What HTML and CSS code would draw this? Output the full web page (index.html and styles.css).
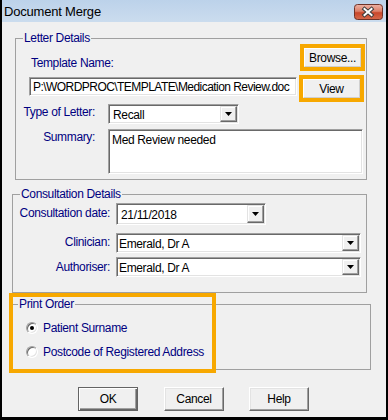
FILE: index.html
```html
<!DOCTYPE html>
<html>
<head>
<meta charset="utf-8">
<title>Document Merge</title>
<link rel="stylesheet" href="styles.css">
</head>
<body>
<div class="window">
  <div class="titlebar">
    <span class="title">Document Merge</span>
    <span class="close">
      <svg width="29" height="16" viewBox="0 0 29 16">
        <defs>
          <linearGradient id="cg" x1="0" y1="0" x2="0" y2="1">
            <stop offset="0" stop-color="#eeb3a5"/>
            <stop offset="0.45" stop-color="#dc8069"/>
            <stop offset="0.55" stop-color="#c8472b"/>
            <stop offset="1" stop-color="#d66a4c"/>
          </linearGradient>
        </defs>
        <rect x="0.5" y="0.5" width="28" height="15" rx="3" fill="url(#cg)" stroke="#6e3328"/>
        <path d="M10.5 5 L17.5 11 M17.5 5 L10.5 11" stroke="#3c3c3c" stroke-width="4" stroke-linecap="square" fill="none"/>
        <path d="M10.5 5 L17.5 11 M17.5 5 L10.5 11" stroke="#ffffff" stroke-width="2" stroke-linecap="square" fill="none"/>
      </svg>
    </span>
  </div>
  <div class="client">
    <div class="group letter">
      <span class="legend">Letter Details</span>
      <div class="row tpl-row">
        <span class="label tpl-label">Template Name:</span>
        <span class="mark"><span class="btn side-btn">Browse...</span></span>
      </div>
      <div class="row path-row">
        <div class="field path">P:\WORDPROC\TEMPLATE\Medication Review.doc</div>
        <span class="mark"><span class="btn side-btn">View</span></span>
      </div>
      <div class="row type-row">
        <span class="label col-a">Type of Letter:</span>
        <div class="field combo type-combo">
          <span class="value">Recall</span>
          <span class="drop"><svg width="7" height="4" viewBox="0 0 7 4"><path d="M0 0H7L3.5 4Z" fill="#000"/></svg></span>
        </div>
      </div>
      <div class="row sum-row">
        <span class="label col-a">Summary:</span>
        <div class="field memo">Med Review needed</div>
      </div>
    </div>

    <div class="group consult">
      <span class="legend">Consultation Details</span>
      <div class="row date-row">
        <span class="label col-b lbl-2">Consultation date:</span>
        <div class="field combo date-combo">
          <span class="value">21/11/2018</span>
          <span class="drop"><svg width="7" height="4" viewBox="0 0 7 4"><path d="M0 0H7L3.5 4Z" fill="#000"/></svg></span>
        </div>
      </div>
      <div class="row clin-row">
        <span class="label col-b lbl-1">Clinician:</span>
        <div class="field combo wide-combo">
          <span class="value value-tight">Emerald, Dr A</span>
          <span class="drop"><svg width="7" height="4" viewBox="0 0 7 4"><path d="M0 0H7L3.5 4Z" fill="#000"/></svg></span>
        </div>
      </div>
      <div class="row auth-row">
        <span class="label col-b lbl-2">Authoriser:</span>
        <div class="field combo wide-combo">
          <span class="value value-tight">Emerald, Dr A</span>
          <span class="drop"><svg width="7" height="4" viewBox="0 0 7 4"><path d="M0 0H7L3.5 4Z" fill="#000"/></svg></span>
        </div>
      </div>
    </div>

    <div class="group print">
      <span class="legend">Print Order</span>
      <div class="radio-row first">
        <span class="radio checked"></span>
        <span class="radio-text">Patient Surname</span>
      </div>
      <div class="radio-row second">
        <span class="radio"></span>
        <span class="radio-text">Postcode of Registered Address</span>
      </div>
      <div class="highlight"></div>
    </div>

    <div class="buttons">
      <span class="btn dlg-btn default ok">OK</span>
      <span class="btn dlg-btn cancel">Cancel</span>
      <span class="btn dlg-btn">Help</span>
    </div>
  </div>
</div>
</body>
</html>
```

FILE: styles.css
```css
* {
  box-sizing: border-box;
}

html,
body {
  margin: 0;
  padding: 0;
}

body {
  background: #000;
  width: 388px;
  height: 420px;
  overflow: hidden;
  font-family: "Liberation Sans", Arial, sans-serif;
  font-size: 12px;
  letter-spacing: -0.35px;
  color: #000;
}

.window {
  margin-left: 2px;
  width: 384px;
  height: 417px;
  background: #f0f0f0;
  display: flex;
  flex-direction: column;
}

.titlebar {
  flex: none;
  height: 22px;
  display: flex;
  justify-content: space-between;
  align-items: flex-start;
  background: linear-gradient(#bcd2ea, #cbdcee);
}

.title {
  font-size: 13px;
  letter-spacing: -0.2px;
  line-height: 23px;
  margin-left: 2px;
}

.close {
  display: block;
  width: 29px;
  height: 16px;
  margin: 4px 3px 0 0;
}

.close svg {
  display: block;
}

.client {
  display: flex;
  flex-direction: column;
}

.group {
  border: 1px solid #a0a0a0;
  display: flex;
  flex-direction: column;
}

.legend {
  align-self: flex-start;
  margin: -8px 0 -7px 7px;
  padding: 0 1px;
  height: 15px;
  line-height: 15px;
  background: #f0f0f0;
  color: #000080;
  white-space: nowrap;
}

.row {
  display: flex;
}

.label {
  color: #000080;
  line-height: 16px;
  white-space: nowrap;
}

/* Letter details */
.letter {
  margin: 16px 0 0 13px;
  width: 352px;
  padding-bottom: 5px;
}

.tpl-row {
  margin: 5px 1px 0 0;
  justify-content: space-between;
  align-items: flex-end;
}

.tpl-label {
  margin-left: 15px;
}

.mark {
  display: flex;
  width: 65px;
  height: 27px;
  border: 4px solid #f7a800;
}

.btn {
  display: flex;
  align-items: center;
  justify-content: center;
  background: #f0f0f0;
  color: #000;
  border: 1px solid;
  border-color: #ffffff #696969 #696969 #ffffff;
  box-shadow: inset -1px -1px #a0a0a0, inset 1px 1px #e3e3e3;
  white-space: nowrap;
}

.side-btn {
  flex: 1;
  border-color: #ffffff #d0d0d0 #d0d0d0 #ffffff;
  box-shadow: none;
}

.path-row {
  margin-top: 4px;
  align-items: flex-start;
}

.field {
  background: #fff;
  color: #000;
  border: 1px solid;
  border-color: #a0a0a0 #ffffff #ffffff #a0a0a0;
  box-shadow: inset 1px 1px #696969, inset -1px -1px #e3e3e3;
  white-space: nowrap;
  overflow: hidden;
}

.path {
  margin: 2px 2px 0 13px;
  width: 268px;
  height: 19px;
  padding-left: 3px;
  line-height: 18px;
  letter-spacing: -0.55px;
}

.type-row {
  margin-top: 2px;
  align-items: flex-start;
}

.col-a {
  width: 79px;
  text-align: right;
}

.combo {
  display: flex;
  align-items: stretch;
}

.type-combo {
  margin-left: 13px;
  width: 131px;
  height: 20px;
}

.value {
  flex: 1;
  padding: 2px 0 0 4px;
  line-height: 16px;
}

.value-tight {
  padding-left: 2px;
}

.drop {
  flex: none;
  width: 17px;
  margin: 1px 1px 1px 0;
  display: flex;
  align-items: center;
  justify-content: center;
  background: #f0f0f0;
  border: 1px solid;
  border-color: #e3e3e3 #696969 #696969 #e3e3e3;
  box-shadow: inset -1px -1px #a0a0a0, inset 1px 1px #ffffff;
}

.drop svg {
  display: block;
}

.sum-row {
  margin-top: 5px;
  align-items: flex-start;
}

.memo {
  margin-left: 13px;
  width: 255px;
  height: 45px;
  padding: 3px 3px;
  line-height: 15px;
}

/* Consultation details */
.consult {
  margin: 14px 0 0 10px;
  width: 355px;
  padding-bottom: 15px;
}

.consult .row {
  align-items: flex-start;
}

.col-b {
  width: 97px;
  text-align: right;
}

.lbl-1 {
  margin-top: 1px;
}

.lbl-2 {
  margin-top: 2px;
}

.date-row {
  margin-top: 8px;
}

.date-combo {
  margin-left: 6px;
  width: 150px;
  height: 22px;
}

.date-combo .value {
  padding-top: 3px;
}

.clin-row {
  margin-top: 8px;
}

.auth-row {
  margin-top: 4px;
}

.wide-combo {
  margin-left: 6px;
  width: 245px;
  height: 20px;
}

/* Print order */
.print {
  position: relative;
  margin: 11px 0 0 8px;
  width: 361px;
  padding-bottom: 9px;
}

.radio-row {
  display: flex;
  align-items: center;
  margin-left: 15px;
  height: 16px;
  line-height: 16px;
  color: #000080;
}

.radio-row.first {
  margin-top: 15px;
}

.radio-row.second {
  margin-top: 8px;
}

.radio {
  flex: none;
  width: 12px;
  height: 12px;
  margin-right: 5px;
  border-radius: 50%;
  background: #fff;
  border: 1px solid;
  border-color: #a0a0a0 #ffffff #ffffff #a0a0a0;
  box-shadow: inset 1px 1px #696969, inset -1px -1px #e3e3e3;
  display: flex;
  align-items: center;
  justify-content: center;
}

.radio.checked::after {
  content: "";
  width: 4px;
  height: 4px;
  border-radius: 50%;
  background: #000;
}

.highlight {
  position: absolute;
  left: -2px;
  top: -12px;
  width: 207px;
  height: 80px;
  border: 4px solid #f7a800;
}

/* Buttons */
.buttons {
  display: flex;
  margin-top: 17px;
  padding-left: 76px;
}

.dlg-btn {
  width: 60px;
  height: 24px;
}

.default {
  border: 1px solid #646464;
  box-shadow: inset 1px 1px #ffffff, inset -1px -1px #696969, inset -2px -2px #a0a0a0;
}

.ok {
  margin-right: 26px;
}

.cancel {
  margin-right: 25px;
}
```
